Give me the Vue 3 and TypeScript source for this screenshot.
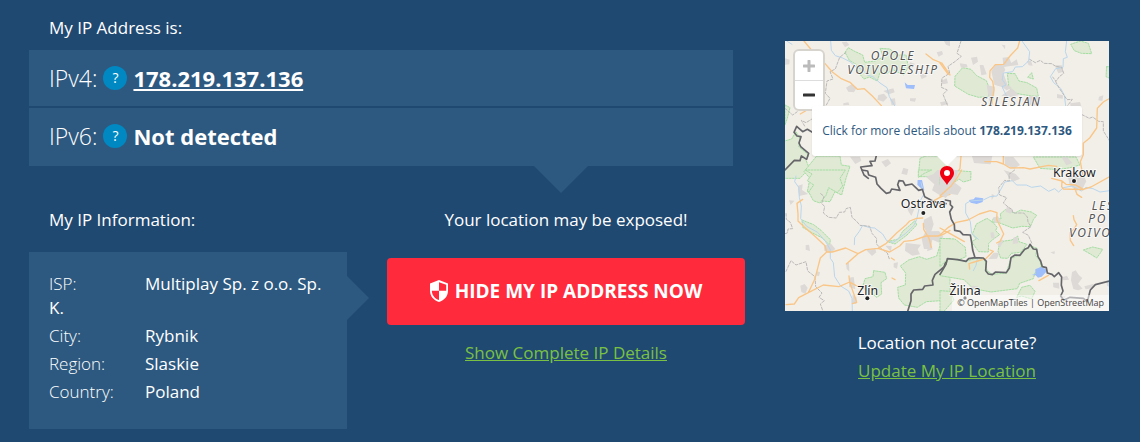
<script setup lang="ts">
interface Detail {
  label: string
  value: string
}

const ip = '178.219.137.136'

const details: Detail[] = [
  { label: 'ISP:', value: 'Multiplay Sp. z o.o. Sp. K.' },
  { label: 'City:', value: 'Rybnik' },
  { label: 'Region:', value: 'Slaskie' },
  { label: 'Country:', value: 'Poland' },
]
</script>

<template>
  <div class="page">
    <main class="main">
      <h2 class="heading">My IP Address is:</h2>
      <div class="addresses">
        <div class="address">
          <span class="version">IPv4:</span>
          <button class="help" type="button" aria-label="About IPv4">?</button>
          <a class="ip" href="#ipv4">{{ ip }}</a>
        </div>
        <div class="address">
          <span class="version">IPv6:</span>
          <button class="help" type="button" aria-label="About IPv6">?</button>
          <span class="missing">Not detected</span>
        </div>
      </div>

      <div class="columns">
        <section class="info">
          <h2 class="heading">My IP Information:</h2>
          <div class="details">
            <p v-for="item in details" :key="item.label" class="detail">
              <span class="label">{{ item.label }}</span><span>{{ item.value }}</span>
            </p>
          </div>
        </section>
        <section class="cta">
          <h2 class="heading centered">Your location may be exposed!</h2>
          <button class="hide" type="button">
            <svg class="shield" viewBox="0 0 18 22" aria-hidden="true">
              <path fill="#fff" fill-rule="evenodd" d="M9 0 L18 3.4 V10.5 C18 16 14.5 20.4 9 22 C3.5 20.4 0 16 0 10.5 V3.4 Z M9 2.2 V10.8 H16.2 V4.7 Z M9 10.8 H1.8 C2 15.2 4.8 18.8 9 20.1 Z" />
            </svg>
            <span>HIDE MY IP ADDRESS NOW</span>
          </button>
          <a class="link" href="#details">Show Complete IP Details</a>
        </section>
      </div>
    </main>

    <aside class="side">
      <div class="map">
        <svg class="tiles" viewBox="0 0 972 810" role="img" aria-label="Map of the location">
          <rect width="972" height="810" fill="#f2efe9" />
          <g transform="translate(-15 -18)">
            <path class="wood" d="M195 52 L205 38 L222 48 L248 60 L254 82 L285 78 L310 66 L300 40 L330 42 L350 60 L378 60 L385 95 L372 120 L340 105 L318 116 L300 112 L292 138 L268 126 L252 132 L235 112 L228 88 L208 76 Z" />
            <path class="wood" d="M15 210 L30 218 L22 250 L15 270 Z M0 322 L35 312 L48 290 L60 310 L56 335 L86 360 L78 376 L88 400 L60 430 L0 430 Z" />
            <path class="wood" d="M110 363 L180 363 L184 390 L210 394 L198 430 L185 480 L165 470 L150 500 L125 498 L110 480 L82 470 L90 430 L72 410 Z" />
            <path class="wood" d="M420 370 L440 362 L500 364 L500 425 L415 425 Z" />
            <path class="urban" d="M185 22 L200 20 L208 30 L195 36 Z M198 158 L215 148 L230 158 L222 172 L205 170 Z M295 180 L312 176 L322 188 L310 200 L292 194 Z M310 168 L340 160 L344 172 L326 178 Z M390 82 L404 86 L400 98 L386 94 Z M470 52 L486 48 L489 58 L476 65 Z M492 18 L510 18 L510 34 L498 29 Z M390 190 L408 190 L405 200 L390 198 Z M420 120 L437 114 L440 125 L425 132 Z M482 138 L500 130 L504 145 L488 148 Z M480 202 L500 198 L505 207 L484 212 Z M330 192 L345 190 L347 210 L335 211 Z M190 205 L205 202 L208 210 L190 211 Z M15 70 L29 74 L28 88 L15 89 Z M210 365 L240 365 L244 377 L226 387 Z M304 380 L324 372 L333 385 L317 397 Z M370 398 L385 403 L381 420 L364 416 Z" />
            <path class="water" d="M374 142 L383 150 L405 150 L402 162 L378 160 Z" />
            <path class="river" d="M152 18 L154 46 L166 62 L188 69 L210 80 L228 96 L244 102 L263 120 L280 126 L300 144 L321 158 L328 185 L344 212 M20 18 L36 28" />
            <path class="region" d="M198 52 L179 67 L166 102 L150 110 L159 132 L141 138 L136 175 L150 190 L139 210 M99 250 L78 263 L64 256 L75 275 M15 220 L38 240 L52 230" />
            <path class="road" d="M72 18 L92 42 L105 68 L120 87 M132 82 L157 111 L182 130 L210 142 L232 163 L253 161 L277 183 L304 212 M438 57 L460 74 L485 84 L510 120 M95 184 L80 202 L86 222 L61 237" />
            <path class="border" d="M97 292 L82 283 L68 290 L50 274 L42 292 L51 303 L63 305 L57 324 L62 335 L86 355 L80 373 L64 363 L60 377 L43 376 L15 405 M289 362 L285 378 L270 379 L276 392 L242 396 L252 420 L265 430" />
          </g>
          <g transform="translate(465 -18)">
            <path class="wood" d="M45 124 L68 98 L93 103 L110 122 L139 137 L149 162 L145 185 L116 187 L85 178 L44 153 Z M202 115 L225 116 L237 138 L261 143 L290 159 L295 184 L275 183 L238 177 L215 171 L206 153 Z M263 127 L275 113 L280 132 Z M392 28 L421 18 L445 25 L455 56 L424 55 L403 47 Z M500 95 L509 95 L509 130 L498 125 Z M280 366 L408 366 L420 390 L390 398 L355 404 L300 400 Z" />
            <path class="urban" d="M154 109 L168 88 L190 91 L196 105 L190 114 L203 150 L215 158 L200 166 L186 156 L163 149 Z M140 150 L164 155 L162 187 L148 201 Z M93 68 L111 65 L114 80 L99 90 Z M188 68 L206 66 L214 84 L230 73 L235 90 L190 96 Z M59 85 L80 88 L83 97 L63 98 Z M119 90 L130 90 L140 118 L124 121 Z M184 182 L215 160 L237 180 L208 187 Z M250 203 L270 182 L294 185 L299 207 L280 213 Z M185 29 L196 31 L195 43 Z M260 78 L273 77 L278 92 L266 91 Z M344 91 L365 91 L370 110 L355 115 Z M351 177 L369 181 L368 191 L351 189 Z M390 205 L420 201 L424 213 L392 213 Z M477 185 L490 181 L487 198 L475 196 Z M95 360 L157 362 L152 388 L102 384 Z M193 367 L220 366 L240 390 L223 401 L195 389 Z M365 367 L382 367 L397 384 L379 391 Z" />
            <path class="river" d="M246 18 L269 50 L266 78 L247 95 L226 96 L218 110 L190 114 L187 134 L198 150 L186 155 L201 186 M380 18 L376 50 L382 67 L370 71 L369 97 L347 101 L331 125 L341 143 L362 160 L373 181 L377 212" />
            <path class="region" d="M63 18 L51 55 L64 64 L46 79 L24 94 L29 115 L6 129 L4 157 L22 165 L9 178 L22 210 M269 73 L286 83 L301 76 L312 85 L335 86 L347 94 L365 97 L371 115 L358 125 L348 139 L338 126 M347 140 L358 160 L381 194 L397 193 L381 214 M426 239 L448 250 L458 246 L476 259 L490 260 L490 288 L509 318" />
            <path class="road" d="M239 18 L233 39 L210 63 L191 88 L166 89 L150 108 L149 127 L158 139 L162 163 L155 211 M0 84 L24 117 M509 190 L490 201 L472 220 L470 279 L449 309 L430 325 L430 359 L421 380 L428 418 M63 363 L60 400 L48 422 M190 363 L190 387 L210 399 L250 398 L270 402 L325 391 L350 394 M190 387 L170 380 L135 380" />
          </g>
          <g transform="translate(-15 387)">
            <path class="wood" d="M76 0 L196 0 L180 25 L188 48 L172 68 L146 53 L138 76 L120 99 L100 92 L86 66 L101 45 L82 32 L96 12 Z M66 150 L101 164 L123 181 L151 209 L149 226 L127 204 L90 185 L68 172 Z M281 302 L315 307 L320 326 L303 338 L305 372 L290 382 L268 364 L247 354 L255 326 L279 320 Z M510 205 L485 210 L470 258 L440 268 L418 260 L386 270 L361 288 L377 309 L376 345 L353 352 L356 384 L373 405 L412 412 L439 395 L510 390 Z M322 215 L355 207 L368 184 L405 152 L410 165 L381 195 L345 222 Z M415 0 L455 0 L433 10 L415 22 Z" />
            <path class="urban" d="M54 47 L68 43 L66 60 L84 72 L57 78 Z M132 227 L153 221 L166 237 L151 250 L133 242 Z M77 225 L87 224 L90 243 L77 239 Z M61 347 L74 342 L83 354 L76 371 L64 366 Z M111 304 L120 307 L117 319 L108 316 Z M198 279 L207 278 L208 305 L200 296 Z M208 323 L221 321 L226 358 L207 350 Z M218 374 L230 383 L229 402 L217 400 Z M259 241 L286 237 L289 247 L276 258 Z M432 149 L454 137 L461 163 L454 184 L477 183 L490 200 L478 218 L457 209 L452 236 L432 237 L425 207 L438 183 L430 169 Z M377 219 L423 224 L413 238 L420 253 L397 257 L375 242 Z M438 20 L461 12 L472 0 L510 0 L510 73 L480 76 L456 61 L463 43 Z M379 110 L407 108 L394 138 L386 125 Z M316 227 L335 228 L333 245 Z M341 280 L354 277 L351 296 L341 292 Z M449 213 L458 238 L441 244 Z M480 377 L489 363 L510 370 L510 395 Z M27 91 L43 92 L32 105 Z" />
            <path class="water" d="M413 30 L426 30 L433 61 L422 54 L412 44 Z" />
            <path class="river" d="M48 18 L44 35 L56 52 L58 82 L64 108 L62 146 L80 169 L113 187 L137 215 L151 239 L151 265 L160 278 L164 320 L182 348 L206 363 L216 385 L217 424 M223 224 L224 203 L238 184 L248 166 L269 173 L284 174 L308 192 L320 212 L340 217 L376 191 L401 167 L410 149 L423 88 L432 72 L423 38" />
            <path class="region" d="M15 191 L22 189 L24 177 L38 176 L31 157 L19 148 L18 128 M122 71 L132 79 L125 100 L134 110 L130 129 L146 142 L169 144 L178 127 L194 126 L198 116 L211 112 L216 142 L229 153 L240 166 L269 169 L276 190 L290 206 L289 222 L305 237 L322 249 L329 270 M18 304 L33 272 L48 285 L78 275 L83 303 L105 320 L107 350 L126 369 L117 382 L133 392 L121 402 L129 424" />
            <path class="road" d="M68 88 L51 100 L54 132 L54 153 L72 170 L104 198 L135 227 L140 246 L157 246 L197 234 L234 251 L257 239 L294 235 L319 220 L350 189 L377 166 L389 153 L410 145 L428 144 M234 251 L199 282 M140 246 L121 264 L105 326 L85 368 L56 383 L43 402 L18 404 M85 368 L130 345 L177 350 L209 336 L207 318 M209 336 L230 397 L217 401 M209 336 L227 346 L248 349 M294 235 L329 246 L359 228 L372 214 L400 211 L438 198 L474 198 L488 194 L510 181 M430 160 L431 178 L448 207 L454 232 M510 73 L484 80 L451 98 M334 264 L343 270 M336 324 L345 329 M480 424 L488 404 L510 394" />
            <path class="border" d="M246 0 L263 3 L266 15 L287 22 L291 42 L303 55 L319 70 L330 67 L335 57 L360 61 L353 44 L357 32 L369 33 L376 46 L396 42 L416 61 L427 58 L434 80 L454 91 L472 98 L498 101 M510 267 L496 279 L492 291 L465 313 L457 331 L459 345 L434 348 L428 358 L401 360 L393 372 L393 392 L383 424" />
          </g>
          <g transform="translate(465 387)">
            <path class="wood" d="M25 0 L93 5 L92 30 L70 36 L57 27 L45 36 L28 20 Z M181 132 L196 119 L225 129 L242 120 L274 126 L290 136 L280 149 L271 170 L246 169 L218 174 L174 157 L155 156 L161 144 L183 147 Z M109 162 L141 145 L160 158 L171 172 L167 182 L179 194 L158 209 L146 220 L145 246 L116 245 L95 215 L109 207 L97 193 Z M0 205 L45 207 L76 232 L78 260 L55 270 L25 265 L0 290 Z M25 266 L80 273 L115 263 L134 266 L141 302 L157 313 L199 309 L212 267 L241 253 L270 227 L291 235 L287 257 L300 272 L306 302 L285 308 L280 326 L239 340 L232 356 L153 366 L100 356 L72 329 L0 317 L18 283 Z M0 362 L30 364 L42 390 L12 424 L0 424 Z M216 210 L233 198 L237 215 L261 223 L242 247 L214 250 L203 265 L182 264 L174 244 L178 223 L193 213 Z M430 240 L458 231 L488 238 L479 252 L470 264 L451 252 Z M245 352 L270 346 L285 364 L275 387 L245 378 L230 382 Z M0 22 L12 22 L9 45 L0 43 Z" />
            <path class="urban" d="M0 0 L55 0 L45 38 L65 54 L53 75 L29 71 L17 84 L0 76 Z M191 0 L226 11 L240 26 L219 35 L206 20 Z M384 22 L405 13 L430 15 L439 34 L427 57 L407 62 L389 45 Z M155 72 L164 76 L155 90 Z M201 109 L218 119 L212 131 L197 125 Z M159 143 L174 138 L182 155 L164 160 Z M151 188 L160 186 L165 205 L154 205 Z M172 224 L181 209 L192 210 L181 231 Z M220 203 L231 200 L235 220 L218 222 Z M331 247 L345 244 L343 253 Z M339 338 L357 338 L358 356 L340 352 Z M359 377 L377 377 L372 390 Z M367 322 L381 317 L387 329 L370 331 Z M396 306 L407 301 L417 316 L427 324 L414 341 L428 356 L414 361 L400 357 L393 330 Z M433 349 L463 341 L455 355 L437 358 Z M499 332 L509 334 L509 351 L501 347 Z M95 347 L115 349 L112 355 L94 356 Z M145 267 L161 248 L178 248 L171 266 Z" />
            <path class="water" d="M87 90 L101 88 L106 82 L130 85 L128 96 L110 102 L92 98 Z M274 315 L286 312 L286 298 L302 291 L317 297 L319 305 L305 320 L294 323 L287 316 Z" />
            <path class="river" d="M115 208 L95 190 L91 155 L77 129 L77 101 L91 93 L130 90 L150 80 L171 78 L183 57 L194 36 L217 32 L230 45 L259 45 L275 52 L302 48 L326 64 L344 56 L356 66 L370 53 L397 48 L424 63 L438 52 L459 56 L480 66 L509 62 M113 262 L108 286 L100 302" />
            <path class="region" d="M224 0 L207 13 L208 33 L194 31 L176 53 L179 75 L200 83 L190 99 L207 113 L216 118 L219 129 L251 129 L262 141 L264 156 L273 170 L248 187 L265 196 L276 221" />
            <path class="road" d="M65 0 L50 25 L34 47 L0 78 M0 195 L25 172 L49 157 L84 150 L118 132 L151 122 L171 128 L170 148 L191 192 L180 214 L170 219 M0 174 L29 190 L73 215 M150 240 L160 244 L137 266 L113 273 L87 281 L89 297 M335 25 L366 33 L378 43 L407 45 L430 58 L453 51 L509 20 M366 33 L365 50 L370 57 L430 59 M404 55 L411 73 L425 82 M400 137 L402 149 L410 164 L402 178 L390 188 L391 211 L401 227 M297 332 L325 316" />
            <path class="border" d="M16 90 L31 93 L31 104 L38 111 L29 126 L34 148 L43 164 L44 181 L60 184 L69 194 L91 195 L95 217 L98 240 L105 263 L86 266 L78 274 L53 269 L22 266 L18 283 L0 313 M105 263 L130 264 L139 274 L137 302 L145 312 L157 314 L167 306 L199 308 L208 294 L213 263 L225 255 L240 256 L254 238 L265 233 L270 223 L280 237 L290 238 L294 260 L302 273 L307 290 L319 293 L322 309 L336 313 L343 320 L356 308 L365 321 L364 346 L369 363 L362 378 L371 391 L390 382 L430 385 L442 395 L451 360 L466 344 L509 333" />
          </g>
          <g class="places">
            <circle cx="415" cy="516" r="6" />
            <circle cx="247" cy="772" r="6" />
            <circle cx="867" cy="420" r="6" />
            <circle cx="540" cy="771" r="5" />
            <text x="415" y="502">Ostrava</text>
            <text x="248" y="761">Zlín</text>
            <text x="868" y="407">Krakow</text>
            <text x="540" y="761">Žilina</text>
          </g>
          <g class="provinces">
            <text x="324" y="58">OPOLE</text>
            <text x="324" y="98">VOIVODESHIP</text>
            <text x="679" y="196">SILESIAN</text>
            <text class="start" x="920" y="507">LES</text>
            <text class="start" x="910" y="547">PO</text>
            <text class="start" x="852" y="588">VOIVO</text>
          </g>
        </svg>
        <div class="zoom">
          <button type="button" aria-label="Zoom in" disabled>
            <svg viewBox="0 0 12 12"><path d="M6 1 V11 M1 6 H11" stroke="#bbb" stroke-width="3" stroke-linecap="round" /></svg>
          </button>
          <button type="button" aria-label="Zoom out">
            <svg viewBox="0 0 12 12"><path d="M1 6 H11" stroke="#333" stroke-width="3" stroke-linecap="round" /></svg>
          </button>
        </div>
        <a class="popup" href="#details">Click for more details about <b>{{ ip }}</b></a>
        <svg class="pin" viewBox="0 0 14 19" aria-hidden="true">
          <path fill="#f00010" d="M7 0 C3 0 0 3 0 7 C0 11.500 4 13.500 7 19 C10 13.500 14 11.500 14 7 C14 3 11 0 7 0 Z" />
          <circle cx="7" cy="7" r="3" fill="#fff" />
        </svg>
        <div class="credits"><a href="#tiles">© OpenMapTiles</a> | <a href="#osm">OpenStreetMap</a></div>
      </div>
      <p class="question">Location not accurate?</p>
      <a class="link" href="#update">Update My IP Location</a>
    </aside>
  </div>
</template>

<style>
body {
  margin: 0;
  background: #204971;
}
</style>

<style scoped>
.page {
  display: grid;
  grid-template-columns: minmax(0, 1fr) 324px;
  gap: 40px;
  padding: 14px 31px 13px 29px;
  color: #fff;
  font: 17px/28px "Open Sans", "Noto Sans", sans-serif;
}

button {
  padding: 0;
  border: 0;
  color: inherit;
  font: inherit;
  cursor: pointer;
}

.heading {
  margin: 0 20px;
  font-size: 17px;
  font-weight: 400;
}

.addresses {
  position: relative;
  margin: 8px 12px 0 0;
  background: #2d5980;
}

.addresses::after {
  content: "";
  position: absolute;
  top: 100%;
  right: 145px;
  border: 27px solid transparent;
  border-top-color: #2d5980;
  border-bottom: 0;
}

.address {
  display: flex;
  align-items: center;
  gap: 6px;
  box-sizing: border-box;
  height: 58px;
  padding: 0 20px 2px;
  font-size: 22px;
}

.address:first-child {
  padding-bottom: 1px;
  border-bottom: 2px solid #204971;
}

.version {
  font-size: 23px;
  font-weight: 300;
}

.help {
  width: 24px;
  height: 24px;
  border-radius: 50%;
  background: #0088c2;
  font-size: 14px;
  line-height: 24px;
}

.ip,
.missing {
  color: #fff;
  font-weight: 700;
}

.columns {
  display: grid;
  grid-template-columns: 318fr 358fr;
  gap: 40px;
  margin-top: 40px;
}

.details {
  position: relative;
  margin-top: 18px;
  padding: 20px 20px 21px;
  background: #2d5980;
}

.details::after {
  content: "";
  position: absolute;
  top: 24px;
  left: 100%;
  border: 22px solid transparent;
  border-left-color: #2d5980;
  border-right: 0;
}

.detail {
  margin: 0 0 4px;
  line-height: 24px;
}

.label {
  display: inline-block;
  width: 96px;
  font-weight: 300;
}

.cta {
  display: flex;
  flex-direction: column;
  align-items: center;
}

.centered {
  text-align: center;
}

.hide {
  display: flex;
  align-items: center;
  justify-content: center;
  gap: 7px;
  width: 100%;
  height: 67px;
  margin: 24px 0 14px;
  padding-bottom: 2px;
  border-radius: 4px;
  background: #ff2a3b;
  font-size: 19px;
  font-weight: 700;
}

.shield {
  width: 18px;
  height: 22px;
}

.link {
  color: #7ac143;
}

.side {
  padding-top: 27px;
  text-align: center;
}

.map {
  position: relative;
  overflow: hidden;
}

.tiles {
  display: block;
  width: 100%;
}

.tiles path {
  fill: none;
  stroke-linejoin: round;
  stroke-linecap: round;
}

.tiles .wood {
  fill: #e0e9d4;
  stroke: #a4dea2;
  stroke-width: 3;
  stroke-dasharray: 5 4;
}

.tiles .urban {
  fill: #dcd9d6;
}

.tiles .water {
  fill: #9ebdfb;
}

.tiles .river {
  stroke: #bad6ec;
  stroke-width: 3;
}

.tiles .region {
  stroke: #bcbab9;
  stroke-width: 3;
  stroke-dasharray: 8 5;
}

.tiles .road {
  stroke: #fac687;
  stroke-width: 4;
}

.tiles .border {
  stroke: #66666a;
  stroke-width: 5;
}

.places,
.provinces {
  fill: #222;
  stroke: #fff;
  stroke-width: 5px;
  stroke-opacity: 0.8;
  paint-order: stroke;
  font-family: "Noto Sans", sans-serif;
  font-size: 37px;
  text-anchor: middle;
}

.provinces {
  fill: #555;
  font-size: 36px;
  font-style: italic;
  letter-spacing: 5px;
}

.provinces .start {
  text-anchor: start;
}

.zoom {
  position: absolute;
  top: 8px;
  left: 8px;
  border: 2px solid #d6d4cd;
  border-radius: 6px;
  background: #ddd;
  overflow: hidden;
}

.zoom button {
  display: grid;
  place-items: center;
  width: 28px;
  height: 29px;
  background: #fff;
}

.zoom button + button {
  border-top: 1px solid #ddd;
}

.zoom svg {
  width: 12px;
  height: 12px;
}

.popup {
  position: absolute;
  top: 65px;
  left: 50%;
  width: 270px;
  margin-left: -135px;
  border-radius: 3px;
  background: #fff;
  color: #2d5980;
  font-size: 12px;
  line-height: 50px;
  text-decoration: none;
  white-space: nowrap;
  box-shadow: 0 1px 2px rgba(0, 0, 0, 0.1);
}

.popup::after {
  content: "";
  position: absolute;
  top: 100%;
  left: 50%;
  margin-left: -10px;
  border: 10px solid transparent;
  border-top-color: #fff;
  border-bottom: 0;
}

.pin {
  position: absolute;
  top: 125px;
  left: 50%;
  width: 14px;
  height: 19px;
  margin-left: -7px;
}

.credits {
  position: absolute;
  right: 0;
  bottom: 0;
  padding: 0 5px;
  background: rgba(255, 255, 255, 0.5);
  color: #444;
  font-size: 9px;
  line-height: 16px;
}

.credits a {
  color: inherit;
  text-decoration: none;
}

.question {
  margin: 18px 0 0;
}
</style>
